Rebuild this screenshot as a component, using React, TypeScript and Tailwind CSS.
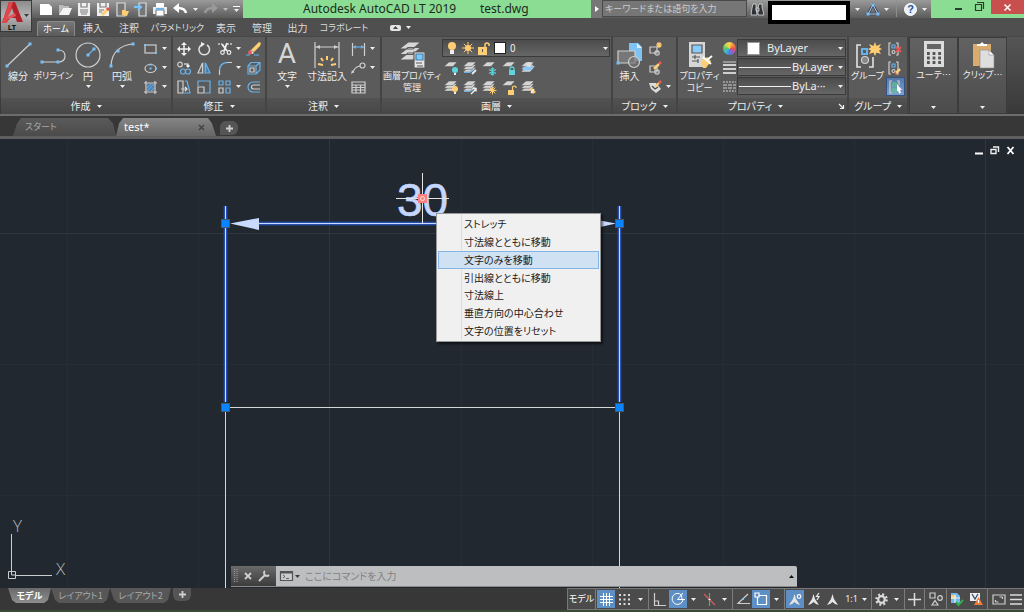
import { useState } from 'react';
import type { ReactNode } from 'react';

const G = '#cfcfcf';
const B = '#69b1e8';
const Y = '#ffce73';

function Icon({ w = 16, h = 16, vb, children }: { w?: number; h?: number; vb?: string; children: ReactNode }) {
  return (
    <svg width={w} height={h} viewBox={vb ?? `0 0 ${w} ${h}`} fill="none" stroke={G} strokeWidth={1.2} className="shrink-0 overflow-visible" aria-hidden="true">
      {children}
    </svg>
  );
}

function Caret({ dark = false }: { dark?: boolean }) {
  return (
    <svg width="5" height="3" viewBox="0 0 5 3" className="shrink-0" aria-hidden="true">
      <path d="M0 0h5L2.5 3z" fill={dark ? '#3c3c3c' : '#eeeeee'} />
    </svg>
  );
}

// small blue grip points used all over the draw icons
function Dots({ at, s = 3 }: { at: number[][]; s?: number }) {
  return (
    <>
      {at.map(([x, y]) => (
        <rect key={`${x}-${y}`} x={x - s / 2} y={y - s / 2} width={s} height={s} fill="#77c0f5" stroke="none" />
      ))}
    </>
  );
}

function Sheets({ y = 0, n = 3, x = 0 }: { y?: number; n?: number; x?: number }) {
  return (
    <g fill="#d4d4d4" stroke="#555" strokeWidth=".5">
      {Array.from({ length: n }, (_, i) => n - 1 - i).map((i) => (
        <path key={i} d={`M${x} ${y + 4.5 + i * 2.8}L${x + 5} ${y + i * 2.8}h8l-4 4.500z`} />
      ))}
    </g>
  );
}

/* ---------- ribbon building blocks ---------- */

function Panel({ title, width, launcher, children }: { title: string; width: string; launcher?: boolean; children: ReactNode }) {
  return (
    <section className={`${width} flex shrink-0 flex-col border-r-2 border-[#444444] bg-[#5b5b5b]`}>
      <div className="flex h-[62px] items-start pt-[2px]">{children}</div>
      <button className="flex h-4 items-center justify-center gap-[6px] bg-linear-to-b from-[#525252] to-[#474747] text-[10px] leading-4 text-[#eeeeee]">
        <span className={launcher ? 'ml-auto' : ''}>{title}</span>
        <Caret />
        {launcher && (
          <span className="ml-auto pr-[3px]">
            <Icon w={5} h={5}>
              <path d="M0 0l4 4M4.500 1v3.500H1" stroke="#eee" />
            </Icon>
          </span>
        )}
      </button>
    </section>
  );
}

function Big({ label, width, caret, small, icon }: { label: string; width: string; caret?: boolean; small?: boolean; icon: ReactNode }) {
  return (
    <button className={`${width} ${small ? 'text-[9px]' : 'text-[10px]'} flex shrink-0 flex-col items-center leading-3 text-[#eeeeee]`}>
      <span className="flex h-[31px] items-center">{icon}</span>
      <span className="whitespace-pre">{label}</span>
      {caret && (
        <span className="mt-[3px] flex">
          <Caret />
        </span>
      )}
    </button>
  );
}

function Small({ name, icon, caret }: { name: string; icon: ReactNode; caret?: boolean }) {
  return (
    <button aria-label={name} className="flex h-[19px] items-center gap-1">
      {icon}
      {caret && <Caret />}
    </button>
  );
}

/* ---------- ribbon panels ---------- */

function DrawPanel() {
  return (
    <Panel title="作成" width="w-[172px]">
      <Big width="w-[34px]" label="線分" icon={<Icon w={26} h={28}><path d="M2 25L25 3" /><Dots at={[[2, 25], [25, 3]]} /></Icon>} />
      <Big width="w-9" small label="ポリライン" icon={<Icon w={28} h={28}><path d="M3 21h16q7 0 7-6t-7-6" /><Dots at={[[3, 21], [19, 21], [19, 9]]} /></Icon>} />
      <Big width="w-[34px]" caret label="円" icon={<Icon w={26} h={28}><circle cx="13" cy="14" r="12" /><path d="M13 14l6-6" stroke={B} /><Dots at={[[13, 14], [19, 8]]} /></Icon>} />
      <Big width="w-[34px]" caret label="円弧" icon={<Icon w={26} h={28}><path d="M2 25Q3 5 24 3" /><Dots at={[[2, 25], [9, 10], [24, 3]]} /></Icon>} />
      <div className="ml-1 flex flex-col">
        <Small name="長方形" caret icon={<Icon w={15} h={14}><rect x="2" y="3" width="11" height="8" /><Dots at={[[2, 3], [13, 11]]} s={2} /></Icon>} />
        <Small name="楕円" caret icon={<Icon w={15} h={14}><ellipse cx="7.500" cy="7.500" rx="5.500" ry="4" /><Dots at={[[7.5, 7.5], [7.5, 3.5], [13, 7.5]]} s={2} /></Icon>} />
        <Small name="ハッチング" caret icon={<Icon w={15} h={14}><rect x="4" y="4" width="7" height="7" fill="#4d86b5" stroke="none" /><path d="M1 3h13M1 12h13M3 1v13M12 1v13" /><path d="M4 8l4-4M4 11l7-7M8 11l3-3" stroke={B} strokeWidth=".8" /></Icon>} />
      </div>
    </Panel>
  );
}

function ModifyPanel() {
  return (
    <Panel title="修正" width="w-[94px]">
      <div className="grid grid-cols-[20px_21px_28px_18px] pl-1">
        <Small name="移動" icon={<Icon w={14} h={14}><path d="M7 2v10M2 7h10" stroke="#eee" strokeWidth="1.500" /><path d="M7 0l3 3H4zM7 14l3-3H4zM0 7l3-3v6zM14 7l-3-3v6z" fill="#eee" stroke="none" /></Icon>} />
        <Small name="回転" icon={<Icon w={14} h={14}><path d="M10 3A5.300 5.300 0 1 1 4.500 3" stroke="#e2e2e2" strokeWidth="1.500" /><path d="M4 0v5l4-3z" fill="#eee" stroke="none" /></Icon>} />
        <Small name="トリム" caret icon={<Icon w={14} h={14}><path d="M0 2h4M9 2h5" stroke="#fff" strokeDasharray="2 1" /><path d="M4 2l5 7M9 1L6 9" stroke="#eee" strokeWidth="1.800" /><circle cx="4.500" cy="10.500" r="1.800" stroke="#eee" /><circle cx="11" cy="10.500" r="1.800" stroke="#eee" /></Icon>} />
        <Small name="削除" icon={<Icon w={15} h={14}><path d="M5 8l8-8 2 1-1 3-6 6z" fill={Y} stroke="none" /><path d="M5 8l3 3-2 1-3-2z" fill="#eee" stroke="none" /><circle cx="4" cy="10.500" r="2" fill="#ee5a5a" stroke="none" /><path d="M0 13h4M8 13h5" stroke={B} /></Icon>} />
        <Small name="複写" icon={<Icon w={14} h={14}><circle cx="3" cy="3.500" r="2.300" /><path d="M7 3h4v3M9.500 4.500L11 6l1.500-1.500" stroke="#fff" /><circle cx="6" cy="10.500" r="2.500" stroke={B} /><circle cx="11" cy="10.500" r="2.500" stroke={B} /></Icon>} />
        <Small name="鏡像" icon={<Icon w={14} h={14}><path d="M5.500 2v10H1z" /><path d="M8.500 2v10H13z" fill="#3f7dab" stroke={B} /><path d="M7 1v12" stroke={B} strokeWidth=".8" /></Icon>} />
        <Small name="フィレット" caret icon={<Icon w={14} h={14}><path d="M1.500 9Q2 2 9 1.500" stroke={B} strokeWidth="1.400" /><path d="M9 1.500h5M1.500 14V9" /></Icon>} />
        <Small name="分解" icon={<Icon w={15} h={14}><path d="M2 5h8v8H2zM5 1.500h9V9l-4 4M2 5l3-3.500M10 5l4-3.500" stroke={B} /><path d="M4 7h4v4H4z" /></Icon>} />
        <Small name="ストレッチ" icon={<Icon w={14} h={14}><path d="M1 1h5v12H1zM4 9h5" /><path d="M8 7l2 2-2 2" stroke="#eee" /><path d="M8 1h2l3 12H7" stroke={B} /></Icon>} />
        <Small name="尺度変更" icon={<Icon w={14} h={14}><path d="M1 6V1h12v12H8" stroke={B} /><path d="M1 7h6v6H1z" /></Icon>} />
        <Small name="配列複写" caret icon={<Icon w={14} h={14}><path d="M1 1h4v4H1zM8 1h4v4H8zM8 8h4v5H8z" stroke={B} /><path d="M1 8h4v5H1z" /></Icon>} />
        <Small name="オフセット" icon={<Icon w={15} h={14}><path d="M14 2H7a5 5 0 0 0 0 10h7" stroke={B} /><path d="M14 5H7.500a2 2 0 0 0 0 4H14" /></Icon>} />
      </div>
    </Panel>
  );
}

function AnnotationPanel() {
  return (
    <Panel title="注釈" width="w-[115px]">
      <Big
        width="w-10"
        caret
        label="文字"
        icon={
          <Icon w={24} h={28}>
            <text x="12" y="22" textAnchor="middle" fontFamily="Roboto" fontSize="28" fill="#d6d6d6" stroke="none">A</text>
          </Icon>
        }
      />
      <Big width="w-[40px]" label="寸法記入" icon={<Icon w={28} h={28}><path d="M2 1v26M26 1v26M2 6h24" /><path d="M3 6l4-2v4zM25 6l-4-2v4z" fill={G} stroke="none" /><path d="M14 15v4M8 17l2 3M20 17l-2 3M5 23l5 1M23 23l-5 1" stroke={Y} strokeWidth="2" /></Icon>} />
      <div className="ml-1 flex flex-col">
        <Small name="長さ寸法" caret icon={<Icon w={15} h={14}><path d="M1.500 1v13M13.500 1v13" /><path d="M2 5h11" stroke={B} /><path d="M2 5l3-2v4zM13 5l-3-2v4z" fill={B} stroke="none" /></Icon>} />
        <Small name="引出線" caret icon={<Icon w={15} h={14}><path d="M2 12Q3 6 9 5" /><circle cx="11.500" cy="4.500" r="2.500" /><path d="M0 13l1-4 2 2z" fill={G} stroke="none" /></Icon>} />
        <Small name="表" icon={<Icon w={15} h={14}><path d="M1 2h13v11H1zM1 5h13M1 7.500h13M1 10h13M5 5v8M9.500 5v8" /></Icon>} />
      </div>
    </Panel>
  );
}

const layerTools: { name: string; n: number; mark: ReactNode }[] = [
  { name: '非表示', n: 1, mark: <><circle cx="11" cy="8" r="3" fill="#5fd4dc" stroke="none" /><path d="M10 11h2v2h-2z" fill="#eee" stroke="none" /></> },
  { name: '選択表示', n: 3, mark: <><path d="M1 10.500h6l3-3" stroke={B} /><path d="M9 12l4-4" stroke="#eee" strokeWidth="1.800" /></> },
  { name: 'フリーズ', n: 1, mark: <path d="M10.500 5.500v8M7 7.500l7 4M14 7.500l-7 4M9 6.500l1.500 1L12 6.500M9 12.500l1.500-1 1.500 1" stroke="#5fd4dc" /> },
  { name: 'ロック', n: 1, mark: <><path d="M7 8h6v5H7z" fill="#5fd4dc" stroke="none" /><path d="M8 8V6q2-2 4 0v2" stroke="#5fd4dc" /></> },
  { name: '現在層', n: 3, mark: <><path d="M1 8.500L5 4h9l-4 4.500z" fill="#8dc8f4" stroke="none" /><circle cx="8" cy="2.500" r="2.500" fill="#ddd" stroke="none" /></> },
  { name: '全表示', n: 3, mark: <><circle cx="11" cy="8" r="3" fill={Y} stroke="none" /><path d="M10 11h2v2h-2z" fill="#eee" stroke="none" /></> },
  { name: '選択解除', n: 3, mark: <><path d="M1 10.500h6l2-2" stroke={B} /><path d="M8 13l5-5M10 7.500h3v3" stroke="#eee" strokeWidth="1.500" /></> },
  { name: 'フリーズ解除', n: 3, mark: <><path d="M10.500 5.500v8M6.500 9.500h8M7.700 6.700l5.600 5.600M13.300 6.700l-5.600 5.600" stroke={Y} strokeWidth="1" /><circle cx="10.500" cy="9.500" r="2" fill={Y} stroke="none" /></> },
  { name: 'ロック解除', n: 1, mark: <><path d="M6 9h6v5H6z" fill={Y} stroke="none" /><path d="M10.500 9V6q2-2 3.500 0v1" stroke={Y} /></> },
  { name: '一致', n: 3, mark: <><path d="M8 8l4 5 3-2-4-4z" fill={Y} stroke="none" /><path d="M10 12l3-4" stroke="#eee" strokeWidth="1.500" /></> },
];

function LayerPanel() {
  return (
    <Panel title="画層" width="w-[231px]">
      <Big
        width="w-[60px]"
        small
        label={'画層プロパティ\n管理'}
        icon={
          <Icon w={28} h={28}>
            <path d="M1 19l9-7h13l-8 7zM1 13.500l9-7h13l-8 7zM1 8l9-7h13l-8 7z" fill="#d6d6d6" stroke="#5b5b5b" />
            <path d="M16 11h11v16H16z" fill="#e6e6e6" stroke="#5b5b5b" />
            <path d="M18 13h7v6h-7z" fill="#7fc8fa" stroke="#3f7dab" />
            <path d="M18 22h6M19 25h6" stroke="#555" />
          </Icon>
        }
      />
      <div className="flex flex-1 flex-col">
        <label className="mr-px flex h-[18px] items-center border border-[#3a3a3a] bg-linear-to-b from-[#4c4c4c] to-[#666666] pl-1">
          <Icon w={10} h={14}><circle cx="5" cy="5" r="4" fill={Y} stroke="none" /><path d="M3 9h4v4H3z" fill="#eee" stroke="none" /></Icon>
          <span className="ml-[5px]"><Icon w={12} h={12}><path d="M6 0v12M0 6h12M1.800 1.800l8.400 8.400M10.200 1.800l-8.400 8.400" stroke={Y} strokeWidth="1" /><circle cx="6" cy="6" r="3" fill={Y} stroke="none" /></Icon></span>
          <span className="ml-1"><Icon w={12} h={13}><path d="M0 5h9v8H0z" fill={Y} stroke="none" /><path d="M7 5V2q2-2 4 0v2" stroke={Y} strokeWidth="1.500" /><path d="M4 7h1v3H4z" fill="#555" stroke="none" /></Icon></span>
          <span className="ml-1 size-3 border border-[#222222] bg-white" />
          <select aria-label="画層" className="ml-1 flex-1 appearance-none text-[10px] leading-4 text-[#eeeeee]">
            <option>0</option>
          </select>
          <span className="pr-px"><Caret /></span>
        </label>
        <div className="mt-[2px] grid w-[98px] grid-cols-5 pl-[2px]">
          {layerTools.map((t) => (
            <Small key={t.name} name={t.name} icon={<Icon w={15} h={14}><Sheets n={t.n} />{t.mark}</Icon>} />
          ))}
        </div>
      </div>
    </Panel>
  );
}

function BlockPanel() {
  return (
    <Panel title="ブロック" width="w-[65px]">
      <Big
        width="w-[33px]"
        label="挿入"
        icon={
          <Icon w={27} h={28}>
            <path d="M13 2h9l4 4v14H13z" fill="#7fc3f2" stroke="none" />
            <path d="M21 2v5h5z" fill="#d8eefc" stroke="none" />
            <path d="M2 10h17v12H2z" fill="#777" />
            <circle cx="18" cy="21" r="5.500" fill="#777777aa" />
            <Dots at={[[2, 22]]} s={3} />
          </Icon>
        }
      />
      <div className="ml-[2px] flex flex-col">
        <Small name="ブロック作成" icon={<Icon w={14} h={14}><path d="M2 5h7v6H2z" /><circle cx="9" cy="11" r="2.200" /><path d="M11 0v6M8 3h6M9 1l4 4M13 1L9 5" stroke={Y} /></Icon>} />
        <Small name="ブロック編集" icon={<Icon w={14} h={14}><path d="M2 5h7v6H2z" /><circle cx="9" cy="11" r="2.200" /><path d="M6 8l5-5" stroke={Y} strokeWidth="2.500" /><path d="M11 3l2-2" stroke="#ee5a5a" strokeWidth="2.500" /></Icon>} />
        <Small name="属性編集" caret icon={<Icon w={14} h={14}><path d="M1 3h7l5 6-5 4-5-4z" fill="#ddd" stroke="none" /><path d="M4 6l3 3 3-2" stroke="#444" /><path d="M7 7l4-4" stroke={Y} strokeWidth="2" /><path d="M11 3l2-2" stroke="#ee5a5a" strokeWidth="2.500" /></Icon>} />
      </div>
    </Panel>
  );
}

function PropertySelect({ name, value, line }: { name: string; value: string; line?: boolean }) {
  return (
    <label className="flex h-[18px] items-center border border-[#3a3a3a] bg-linear-to-b from-[#4c4c4c] to-[#666666] pr-[2px] pl-px">
      {line ? <span className="h-px w-[52px] bg-[#eeeeee]" /> : <span className="mr-[6px] ml-2 size-[13px] border border-[#999999] bg-white" />}
      <select aria-label={name} className="w-px flex-1 appearance-none pl-px font-[Noto_Sans] text-[11px] leading-4 text-[#eeeeee]">
        <option>{value}</option>
      </select>
      <Caret />
    </label>
  );
}

function PropertiesPanel() {
  return (
    <Panel title="プロパティ" width="w-[171px]" launcher>
      <Big
        width="w-[43px]"
        small
        label={'プロパティ\nコピー'}
        icon={
          <Icon w={26} h={28}>
            <path d="M2 1h16v25H2z" fill="#d6d6d6" stroke="none" />
            <path d="M5 4h10v8H5z" fill="#8accf8" stroke="#555" />
            <path d="M5 16h8M5 20h6M8 14v4M11 18v4" stroke="#555" />
            <path d="M14 20l6-4 4 4-5 7h-3z" fill={Y} stroke="none" />
            <path d="M25 15l-5 4M16 16l8 7" stroke="#fff" strokeWidth="2" />
          </Icon>
        }
      />
      <div className="flex w-[16px] flex-col items-center">
        <Small name="色" icon={<span className="size-[13px] rounded-full bg-[conic-gradient(#ffce54,#f6903c,#e4534b,#a657c8,#4a7fe0,#40b8d0,#58c46a,#c4d84c,#ffce54)]" />} />
        <Small name="線の太さ" icon={<Icon w={13} h={13}><path d="M0 1h13" strokeWidth="1" /><path d="M0 4h13" strokeWidth="2" /><path d="M0 8h13" strokeWidth="2" /><path d="M0 12h13" strokeWidth="2" /></Icon>} />
        <Small name="線種" icon={<Icon w={13} h={13}><path d="M0 2h13M0 11h13" strokeWidth="1" strokeDasharray="2 1" /><path d="M0 5h13M0 8h13" strokeWidth="1" strokeDasharray="4 1" /></Icon>} />
      </div>
      <div className="mr-px flex flex-1 flex-col gap-px">
        <PropertySelect name="オブジェクトの色" value="ByLayer" />
        <PropertySelect name="オブジェクトの線の太さ" value="ByLayer" line />
        <PropertySelect name="オブジェクトの線種" value="ByLa···" line />
      </div>
    </Panel>
  );
}

function GroupPanel() {
  const brackets = <path d="M3 1H1v12h2M8 1h2v12H8" />;
  return (
    <Panel title="グループ" width="w-[60px]">
      <Big
        width="w-[37px]"
        small
        label="グループ"
        icon={
          <Icon w={28} h={28}>
            <path d="M7 4H3v22h4M15 26h4V16" stroke="#e2e2e2" strokeWidth="1.600" />
            <path d="M8 13V8h5v5z" stroke={B} strokeWidth="2" />
            <circle cx="11" cy="19" r="3.500" fill="#888" />
            <path d="M21 1l1.500 4L27 3l-2 3.500L28 8l-3 1.500L27 13l-4.500-1.500L21 15l-1.500-3.500L15 13l2-3.500L14 8l3-1.500L15 3l4.500 2z" fill={Y} stroke="none" />
          </Icon>
        }
      />
      <div className="flex flex-col">
        <Small name="グループ解除" icon={<Icon w={16} h={14} vb="-2 0 16 14">{brackets}<path d="M4 3h3v3H4z" stroke={B} /><circle cx="5.500" cy="10" r="1.500" /><path d="M8 5l5 5M13 5l-5 5" stroke="#ee5050" strokeWidth="1.800" /></Icon>} />
        <Small name="グループ編集" icon={<Icon w={16} h={14} vb="-2 0 16 14">{brackets}<path d="M4 3h3v3H4z" stroke={B} /><circle cx="5.500" cy="10" r="1.500" /><path d="M8 12l4-4" stroke={Y} strokeWidth="2.500" /><path d="M7 13l1-1" stroke="#ee5050" strokeWidth="2.500" /></Icon>} />
        <button aria-label="グループ選択" className="flex size-[19px] items-center justify-center border border-[#34527d] bg-linear-to-b from-[#5877a8] to-[#7ba0d2]">
          <Icon w={14} h={14}><path d="M3 1H1v12h2M8 1h2v4" /><path d="M4 3h3v3H4zM4 9h3v3H4z" stroke="#52d675" /><path d="M8 4l5 6H11l1 3-2 .5-1-3-1 1z" fill="#fff" stroke="none" /></Icon>
        </button>
      </div>
    </Panel>
  );
}

function CollapsedPanel({ label, icon }: { label: string; icon: ReactNode }) {
  return (
    <button className="flex w-[49px] shrink-0 flex-col items-center border border-[#3c3c3c] bg-linear-to-b from-[#626262] to-[#4c4c4c] pt-px text-[9px] leading-3 whitespace-nowrap text-[#eeeeee]">
      <span className="flex h-[30px] items-center">{icon}</span>
      <span>{label}</span>
      <span className="mt-auto mb-[4px]"><Caret /></span>
    </button>
  );
}

/* ---------- header ---------- */

const quickAccess: { name: string; icon: ReactNode }[] = [
  { name: '新規作成', icon: <path d="M2 2h9l3 3v8H2z" fill="#fff" stroke="none" /> },
  { name: '開く', icon: <><path d="M2 13V3h4l1 1h5v2H6z" fill="#bbb" stroke="none" /><path d="M2 13l4-7h9l-3 7z" fill="#f4f4f4" stroke="none" /></> },
  { name: '上書き保存', icon: <><path d="M2 1h12v13H2z" fill="#f0f0f0" stroke="none" /><path d="M5 1v4h6V1M4 8h8M4 10h8M5 12h6" stroke="#777" /></> },
  { name: '名前を付けて保存', icon: <><path d="M2 1h12v13H2z" fill="#f0f0f0" stroke="none" /><path d="M5 1v4h6V1M4 8h5M4 10h3" stroke="#777" /><path d="M7 13l6-6" stroke={Y} strokeWidth="3" /><path d="M12 8l2-2" stroke="#e05050" strokeWidth="3" /></> },
  { name: 'モバイルから開く', icon: <><path d="M3 1h8v13H3z" fill="#777" stroke="#ddd" /><path d="M8 13V8h3l1 1h3l-2 5z" fill={Y} stroke="none" /></> },
  { name: 'モバイルに保存', icon: <><path d="M6 1h7v13H6z" fill="#777" stroke="#ddd" /><path d="M1 5h6M5 2l3 3-3 3" stroke="#7cc4f8" strokeWidth="2" /></> },
  { name: '印刷', icon: <><path d="M4 1h8v4H4z" fill="#fff" stroke="none" /><path d="M1 5h14v7H1z" fill="#eee" stroke="none" /><path d="M4 8h8v6H4z" fill="#fff" stroke="#888" /><path d="M4 7h8" stroke={B} strokeWidth="2" /></> },
];

const ribbonTabs = [
  { label: '挿入', style: 'w-9' },
  { label: '注釈', style: 'w-9' },
  { label: 'パラメトリック', style: 'w-[61px] text-[9px]' },
  { label: '表示', style: 'w-9' },
  { label: '管理', style: 'w-9' },
  { label: '出力', style: 'w-[35px]' },
  { label: 'コラボレート', style: 'w-[58px] text-[9px]' },
];

function Header() {
  return (
    <header className="flex h-9 shrink-0 bg-[#4f4f4f]">
      <button className="relative flex h-8 w-8 shrink-0 flex-col items-center border border-[#3a3a3a] bg-linear-to-b from-[#8c8c8c] via-[#b4b4b4] to-[#868686] pr-2 font-[Liberation_Sans] text-[7px] leading-[7px] font-bold text-black">
        <Icon w={22} h={23}>
          <path d="M1 22L8 1h6l8 20h-6l-1.500-4H9l-3 4z" fill="#b3202a" stroke="none" />
          <path d="M8 1h4L6 22H1z" fill="#e0474d" stroke="none" />
          <path d="M11 7l2 6-6 3z" fill="#a9a9a9" stroke="none" />
          <path d="M5 17l9-5 1 3-7 3z" fill="#e5565a" stroke="none" />
        </Icon>
        <span>LT</span>
        <span className="absolute top-[13px] right-[2px]"><Caret dark /></span>
      </button>
      <div className="flex min-w-0 flex-1 flex-col">
        <div className="flex h-[18px] bg-linear-to-b from-[#9a9a9a] to-[#5c5c5c]">
          <nav className="flex w-[211px] shrink-0 items-center pl-1">
            {quickAccess.map((q) => (
              <button key={q.name} aria-label={q.name} className="flex w-[19px] justify-center pl-px">
                <Icon w={16} h={15}>{q.icon}</Icon>
              </button>
            ))}
            <button aria-label="元に戻す" className="flex w-[22px] items-center justify-center">
              <Icon w={14} h={12}><path d="M13 10Q12 5 5 5" stroke="#fff" strokeWidth="2.500" /><path d="M0 5l6-5v10z" fill="#fff" stroke="none" /></Icon>
            </button>
            <span className="flex w-[9px] justify-center"><Caret /></span>
            <button aria-label="やり直し" className="flex w-[21px] items-center justify-center">
              <Icon w={14} h={12}><path d="M1 10Q2 5 9 5" stroke="#9a9a9a" strokeWidth="2.500" /><path d="M14 5L8 0v10z" fill="#9a9a9a" stroke="none" /></Icon>
            </button>
            <span className="flex w-[9px] justify-center opacity-60"><Caret /></span>
            <span className="flex flex-1 flex-col items-center gap-[2px]"><i className="h-px w-[7px] bg-white" /><Caret /></span>
          </nav>
          <h1 className="flex flex-1 items-center bg-[#8bdd94] pl-[60px] font-[Noto_Sans] text-[12px] leading-[18px] whitespace-pre text-[#1c2b1e]">
            <span className="w-[177px]">Autodesk AutoCAD LT 2019</span>
            <span>test.dwg</span>
          </h1>
          <div className="flex w-[433px] shrink-0">
            <span className="flex w-[11px] items-center justify-center bg-[#777777]">
              <Icon w={4} h={6}><path d="M0 0l4 3-4 3z" fill="#fff" stroke="none" /></Icon>
            </span>
            <input aria-label="検索" placeholder="キーワードまたは語句を入力" className="h-[17px] w-[145px] border border-[#4a4a4a] bg-[#767676] px-[2px] text-[9px] leading-4 placeholder-[#cccccc]" />
            <button aria-label="検索開始" className="flex w-[21px] items-center justify-center">
              <Icon w={13} h={13}><path d="M2 1h3v3l1 8H0l1-7zM8 1h3v3l2 8H7V5zM5 5h3v3H5z" fill="#2e3338" stroke="#ddd" strokeWidth=".8" /></Icon>
            </button>
            <div className="z-10 mt-px h-[23px] w-[82px] border-4 border-black bg-white" />
            <div className="flex w-[81px] items-center">
              <span className="flex w-[14px] justify-center"><Caret /></span>
              <button aria-label="アカウント" className="flex w-[18px] justify-center">
                <Icon w={14} h={13}><path d="M7 2l5 9H2z" stroke="#33445e" strokeWidth="2.500" /><path d="M7 2l5 9H2z" stroke="#b9cbe4" strokeWidth="1" /><Dots at={[[7, 2], [12, 11], [2, 11]]} /></Icon>
              </button>
              <span className="flex w-[9px] justify-center"><Caret /></span>
              <i className="ml-[5px] h-4 w-px bg-[#8c8c8c]" />
              <button aria-label="ヘルプ" className="ml-[7px] flex size-[13px] items-center justify-center rounded-full border border-white bg-[#e8f0f8] font-[Liberation_Sans] text-[11px] leading-3 font-bold text-[#28538f]">?</button>
              <span className="flex flex-1 justify-center"><Caret /></span>
            </div>
            <button aria-label="最小化" className="flex w-[39px] items-center justify-end bg-[#8bdd94] pr-2">
              <Icon w={7} h={10}><path d="M0 5h7" stroke="#2b3b2d" strokeWidth="2" /></Icon>
            </button>
            <button aria-label="元のサイズに戻す" className="flex w-[21px] bg-[#8bdd94] pt-[2px] pl-[5px]">
              <Icon w={9} h={9}><path d="M.5 2.500h6v6h-6zM2 .5h6.500V7" stroke="#2b3b2d" /></Icon>
            </button>
            <div className="flex-1 bg-[#8bdd94]">
              <button aria-label="閉じる" className="flex h-[14px] w-full items-center justify-center bg-[#c94f4f]">
                <Icon w={7} h={7}><path d="M.5.5l6 6M6.500.5l-6 6" stroke="#fff" strokeWidth="1.500" /></Icon>
              </button>
            </div>
          </div>
        </div>
        <nav className="flex h-[18px] items-end pl-[5px] text-[10px] leading-4 whitespace-nowrap text-[#dddddd]">
          <button className="h-[15px] w-[38px] rounded-t-xs border border-b-0 border-[#8a8a8a] bg-linear-to-b from-[#777777] to-[#5b5b5b] text-[9px] leading-[14px] text-white">ホーム</button>
          {ribbonTabs.map((t) => (
            <button key={t.label} className={`${t.style} flex h-[17px] items-center justify-center`}>{t.label}</button>
          ))}
          <button aria-label="リボンの切り替え" className="ml-[17px] flex h-[17px] items-center gap-[5px]">
            <span className="flex h-[6px] w-[11px] items-center justify-center rounded-xs bg-[#e4e4e4]">
              <Icon w={5} h={3}><path d="M0 3h5L2.500 0z" fill="#444" stroke="none" /></Icon>
            </span>
            <Caret />
          </button>
        </nav>
      </div>
    </header>
  );
}

/* ---------- drawing area ---------- */

const menuItems = ['ストレッチ', '寸法線とともに移動', '文字のみを移動', '引出線とともに移動', '寸法線上', '垂直方向の中心合わせ', '文字の位置をリセット'];

function Drawing() {
  const grips = [[226, 84], [620, 84], [226, 268], [620, 268]];
  const selected = 'M225.500 67v196M619.500 67v196M258 84.500h330';
  return (
    <svg className="absolute inset-0 size-full" fill="none" aria-hidden="true">
      <path d="M67.500 0v449M198.500 0v449M461.500 0v449M592.500 0v449M723.500 0v449M854.500 0v449M0 225.500h2000M0 356.500h2000" stroke="#242d38" />
      <path d="M329.500 0v449M985.500 0v449M0 94.500h2000" stroke="#2d3643" />
      <path d="M225.500 268v400M619.500 268v400M226 268.500h394" stroke="#d4d7da" />
      {/* selection glow, then the line itself */}
      <path d={selected} stroke="#23458d" strokeWidth="5" strokeOpacity=".5" />
      <path d={selected} stroke="#2750ae" strokeWidth="3" />
      <path d={selected} stroke="#c9daff" />
      <path d="M230 84.500L259 79v12zM616 84.500L587 79v12z" fill="#c9daff" />
      <text x="397" y="77" fontSize="46" fontFamily="Liberation Sans" fill="#c5d6ff" stroke="#c5d6ff" strokeWidth=".6">30</text>
      <path d="M422.500 34v51M396 59.500h53" stroke="#e4e4e4" />
      <rect x="418" y="55" width="9" height="9" fill="#ff8080" />
      <circle cx="422.500" cy="59.500" r="2" stroke="#ffe0e0" />
      {grips.map(([x, y]) => (
        <rect key={`${x}-${y}`} x={x - 4.5} y={y - 3.5} width="8" height="8" fill="#0a84ff" stroke="#445a70" />
      ))}
      <path d="M11.500 395v37M15 436.500h37M8.500 432.500h7v7h-7zM11.500 432v4h4" stroke="#c9cdd0" />
      <g fill="#b4b8bb" fontFamily="Open Sans" fontSize="17" fontWeight="300">
        <text x="13" y="393">Y</text>
        <text x="56" y="436">X</text>
      </g>
    </svg>
  );
}

function ContextMenu() {
  const [hovered, setHovered] = useState(2);
  return (
    <ul className="absolute top-[74px] left-[436px] flex h-[129px] w-[165px] flex-col border border-[#979797] bg-[#f0f0f0] p-px text-[10px] text-[#1a1a1a] shadow-[2px_2px_2px_#00000088]">
      <li className="absolute top-px bottom-px left-[24px] w-px bg-[#dcdcdc]" aria-hidden="true" />
      {menuItems.map((item, i) => (
        <li key={item} className="flex flex-1">
          <button
            onMouseEnter={() => setHovered(i)}
            className={`relative flex flex-1 items-center border pl-[25px] leading-3 ${
              hovered === i ? 'border-[#84b4e4] bg-[#cfe1f2]' : 'border-transparent'
            }`}
          >
            {item}
          </button>
        </li>
      ))}
    </ul>
  );
}

function CommandLine() {
  return (
    <div className="absolute bottom-px left-[231px] flex h-[21px] w-[566px] rounded-t-xs border-b border-[#8a8a8a] bg-[#bdbec0]">
      <div className="flex w-[45px] items-center gap-[6px] rounded-tl-xs bg-linear-to-b from-[#6a6a6a] to-[#3c3c3c] pl-[3px]">
        <Icon w={4} h={14}><path d="M.5 0v14M3 0v14" stroke="#999" strokeDasharray="1 1" /></Icon>
        <button aria-label="コマンドラインを閉じる"><Icon w={8} h={8}><path d="M1 1l6 6M7 1L1 7" strokeWidth="1.800" /></Icon></button>
        <button aria-label="カスタマイズ"><Icon w={12} h={12}><path d="M1 11l6-6" strokeWidth="2" /><path d="M7 1q-2 2 0 4 2 2 4 0" strokeWidth="1.800" /></Icon></button>
      </div>
      <button aria-label="最近使用したコマンド" className="flex items-center gap-[2px] pl-1">
        <Icon w={13} h={10}><path d="M.5.5h12v9H.5z" fill="#ccc" stroke="#555" /><path d="M0 1.500h13" stroke="#555" strokeWidth="2" /><path d="M3 4l2 1.500L3 7M6 7.500h3" stroke="#555" strokeWidth=".9" /></Icon>
        <Caret dark />
      </button>
      <input aria-label="コマンド" placeholder="ここにコマンドを入力" className="min-w-0 flex-1 pl-[5px] text-[10px] leading-5 placeholder-[#808284]" />
      <button aria-label="履歴" className="pr-[3px]"><Icon w={5} h={3}><path d="M0 3h5L2.500 0z" fill="#111" stroke="none" /></Icon></button>
    </div>
  );
}

/* ---------- status bar ---------- */

function StatusButton({ name, width = 'w-[19px]', active, children }: { name: string; width?: string; active?: boolean; children: ReactNode }) {
  return (
    <button aria-label={name} className={`${width} flex h-[18px] shrink-0 items-center justify-center ${active ? 'bg-[#5d8fc4]' : ''}`}>
      {children}
    </button>
  );
}

function StatusGroup({ children }: { children: ReactNode }) {
  return <div className="flex h-full shrink-0 items-center border-l border-[#7c7c7c] px-px">{children}</div>;
}

const scaleMark = <path d="M6.500 1l1.500 5 4 6-3-1-2.500-2L4 11l-3 1 4-6z" fill="#e6e6e6" stroke="none" />;

function StatusBar() {
  const drop = <StatusButton name="オプション" width="w-[13px]"><Caret /></StatusButton>;
  return (
    <div className="flex h-[22px] overflow-hidden border-y border-l border-[#777777] bg-[#4b4b4b]">
      <button className="w-[27px] text-[9px] leading-5 whitespace-nowrap text-white">モデル</button>
      <StatusGroup>
        <StatusButton name="グリッド" width="w-[18px]" active><Icon w={13} h={13}><path d="M3.500 0v13M6.500 0v13M9.500 0v13M0 3.500h13M0 6.500h13M0 9.500h13" stroke="#fff" strokeWidth="1" /></Icon></StatusButton>
        <StatusButton name="スナップ"><Icon w={11} h={11}><path d="M0 1h11M0 5.500h11M0 10h11" stroke="#ddd" strokeWidth="1.800" strokeDasharray="2 2.500" /></Icon></StatusButton>
        {drop}
      </StatusGroup>
      <StatusGroup>
        <StatusButton name="直交モード"><Icon w={13} h={13}><path d="M1.500 0v12.500H13M1.500 8h4v4.500" /></Icon></StatusButton>
        <StatusButton name="極トラッキング" width="w-[18px]" active><Icon w={14} h={14}><path d="M10.500 3A5.500 5.500 0 1 0 12 8M6.500 7.500L12 1M6.500 7.500H14M10 3Q11 5 11 8" stroke="#fff" strokeWidth="1" /></Icon></StatusButton>
        {drop}
        <StatusButton name="アイソメ" width="w-[18px]"><Icon w={13} h={13}><path d="M6.500 0v13" stroke="#45b36b" /><path d="M1 1l11 11" stroke="#d25c5c" /><path d="M5.500 6.500h2" stroke="#fff" /></Icon></StatusButton>
        {drop}
      </StatusGroup>
      <StatusGroup>
        <StatusButton name="参照線" width="w-[18px]"><Icon w={13} h={12}><path d="M11 1L1 10.500h12" /><Dots at={[[6, 6]]} s={2} /></Icon></StatusButton>
        <StatusButton name="オブジェクトスナップ" width="w-[18px]" active><Icon w={14} h={14}><path d="M5 3.500h7.500v9h-9V5" stroke="#fff" /><path d="M1 1h4v4H1z" stroke="#fff" /></Icon></StatusButton>
        {drop}
      </StatusGroup>
      <StatusGroup>
        <StatusButton name="注釈表示" width="w-[18px]" active><Icon w={14} h={13}>{scaleMark}<circle cx="11" cy="3.500" r="1.800" stroke="#fff" /></Icon></StatusButton>
        <StatusButton name="自動尺度"><Icon w={14} h={13}>{scaleMark}<path d="M12 0L9.500 3.500H12L10 7" stroke="#eee" /></Icon></StatusButton>
        <StatusButton name="注釈尺度"><Icon w={13} h={13}>{scaleMark}</Icon></StatusButton>
        <button className="flex h-[18px] w-[28px] items-center justify-center gap-[4px] font-[Noto_Sans] text-[9px] leading-4 text-[#eeeeee]">1:1<Caret /></button>
      </StatusGroup>
      <StatusGroup>
        <StatusButton name="ワークスペース" width="w-[17px]"><Icon w={13} h={13}><circle cx="6.500" cy="6.500" r="5.200" stroke="#ddd" strokeWidth="2.200" strokeDasharray="2 2.084" /><circle cx="6.500" cy="6.500" r="3.300" stroke="#ddd" strokeWidth="2.200" /></Icon></StatusButton>
        {drop}
      </StatusGroup>
      <StatusGroup>
        <StatusButton name="注釈モニター" width="w-[17px]"><Icon w={13} h={13}><path d="M6.500 0v13M0 6.500h13" strokeWidth="1.500" stroke="#ddd" /></Icon></StatusButton>
      </StatusGroup>
      <StatusGroup>
        <StatusButton name="選択表示"><Icon w={14} h={14}><path d="M1 1h5v5H1zM6 8.500l3 4.500H3z" /><circle cx="11" cy="6" r="2.300" /></Icon></StatusButton>
      </StatusGroup>
      <StatusGroup>
        <StatusButton name="ハードウェア" width="w-[18px]"><Icon w={14} h={14}><path d="M1 3V1h6l3 3v7H1z" fill="#75b9ea" stroke="none" /><path d="M1 3h5v4H1z" fill={Y} stroke="none" /><path d="M1 6h9M5 3v8" stroke="#eee" /><path d="M6 10l2.500 3L13 8" stroke="#2fae50" strokeWidth="2" /></Icon></StatusButton>
        <StatusButton name="通知" width="w-[20px]"><Icon w={14} h={14}><path d="M1 1h10v8H1z" fill="#eee" stroke="none" /><path d="M3 2l3 5 3-5" stroke="#346" /><path d="M9.500 5l4.500 8H5z" fill="#ee7a3a" stroke="none" /><path d="M9.500 8v3" stroke="#fff" /></Icon></StatusButton>
      </StatusGroup>
      <StatusGroup>
        <StatusButton name="フルスクリーン" width="w-[19px]"><Icon w={14} h={11}><path d="M1 1h12v9H1zM3.500 8V6M3.500 8h3M10.500 3h-3M10.500 3v2" /></Icon></StatusButton>
        <StatusButton name="カスタマイズ" width="w-[15px]"><Icon w={12} h={11}><path d="M0 1h12M0 5.500h12M0 10h12" stroke="#ddd" strokeWidth="1.500" /></Icon></StatusButton>
      </StatusGroup>
    </div>
  );
}

export default function App() {
  return (
    <div className="flex h-screen min-h-96 flex-col overflow-hidden bg-[#373737] font-[Noto_Sans_CJK_JP,sans-serif] [font-feature-settings:'palt']">
      <Header />

      {/* Ribbon */}
      <div className="flex h-20 shrink-0 border-t border-b-2 border-t-[#474747] border-b-[#6c6c6c] bg-linear-to-b from-[#555555] to-[#393939] pl-px">
        <DrawPanel />
        <ModifyPanel />
        <AnnotationPanel />
        <LayerPanel />
        <BlockPanel />
        <PropertiesPanel />
        <GroupPanel />
        <CollapsedPanel label="ユーテ…" icon={<Icon w={20} h={26}><path d="M0 0h20v26H0z" fill="#dcdcdc" stroke="none" /><path d="M3 3h14v5H3z" fill="#666" stroke="none" /><path d="M3 12.500h14M3 17h14M3 21.500h14" stroke="#555" strokeWidth="3" strokeDasharray="2.800 2.800" /></Icon>} />
        <CollapsedPanel label="クリップ…" icon={<Icon w={22} h={27}><path d="M1 3h18v22H1z" fill="#d9ab6e" stroke="none" /><path d="M5 5V3h3l2-2 2 2h3v2z" fill="#fff" stroke="none" /><path d="M8 9h9l5 5v13H8z" fill="#dedede" stroke="#888" strokeWidth=".6" /><path d="M17 9v5h5z" fill="#fff" stroke="#888" strokeWidth=".6" /></Icon>} />
      </div>

      {/* File tabs */}
      <div className="flex h-[23px] shrink-0 items-end border-b-3 border-[#5f5f5f] pl-[13px] text-[10px] leading-[18px]">
        <button className="h-[18px] w-[103px] bg-linear-to-b from-[#5a5a5a] to-[#4b4b4b] pl-3 text-left text-[9px] text-[#a8a8a8] [clip-path:polygon(0_100%,4px_30%,8px_0,calc(100%-8px)_0,calc(100%-3px)_30%,100%_100%)]">スタート</button>
        <div className="flex h-[18px] w-[100px] items-center bg-linear-to-b from-[#858585] to-[#666666] pr-[11px] pl-2 text-white [clip-path:polygon(0_100%,3px_30%,7px_0,calc(100%-8px)_0,calc(100%-4px)_30%,100%_100%)]">
          <button className="flex-1 text-left font-[Noto_Sans] text-[11px]">test*</button>
          <button aria-label="タブを閉じる"><Icon w={7} h={7}><path d="M1 1l5 5M6 1L1 6" stroke="#444" strokeWidth="1.500" /></Icon></button>
        </div>
        <button aria-label="新しいタブ" className="mb-px ml-1 flex h-[14px] w-[18px] items-center justify-center rounded-t-md rounded-br-md bg-[#555555]">
          <Icon w={7} h={7}><path d="M3.500 0v7M0 3.500h7" strokeWidth="1.800" /></Icon>
        </button>
      </div>

      {/* Model space */}
      <main className="relative min-h-0 flex-1 overflow-hidden bg-[#212830]">
        <Drawing />
        <div className="absolute top-[7px] right-[9px] flex items-center gap-[7px]">
          <button aria-label="図面を最小化"><Icon w={9} h={9}><path d="M1 7.500h8" stroke="#fff" strokeWidth="2" /></Icon></button>
          <button aria-label="図面を元に戻す"><Icon w={9} h={9}><path d="M1 3.500h5v4H1zM3 1h5.500v5" stroke="#eee" strokeWidth="1.400" /></Icon></button>
          <button aria-label="図面を閉じる"><Icon w={9} h={9}><path d="M1.500 1l6 7M7.500 1l-6 7" stroke="#fff" strokeWidth="1.800" /></Icon></button>
        </div>
        <ContextMenu />
        <CommandLine />
      </main>

      <footer className="flex h-6 shrink-0 justify-between border-b-2 border-[#394a38]">
        <nav className="flex h-[15px] pl-2 text-[9px] leading-[14px] whitespace-nowrap text-[#aaaaaa]">
          <button className="w-[43px] bg-linear-to-b from-[#6a6a6a] to-[#8d8d8d] font-bold text-white [clip-path:polygon(0_0,4px_80%,8px_100%,calc(100%-7px)_100%,calc(100%-3px)_80%,100%_0)]">モデル</button>
          <button className="w-[59px] bg-[#575757] [clip-path:polygon(0_0,4px_80%,8px_100%,calc(100%-7px)_100%,calc(100%-3px)_80%,100%_0)]">レイアウト1</button>
          <button className="w-[61px] bg-[#575757] [clip-path:polygon(0_0,4px_80%,8px_100%,calc(100%-7px)_100%,calc(100%-3px)_80%,100%_0)]">レイアウト2</button>
          <button aria-label="新しいレイアウト" className="ml-[2px] flex h-[13px] w-[18px] items-center justify-center rounded-b-md bg-[#555555]">
            <Icon w={7} h={7}><path d="M3.500 0v7M0 3.500h7" strokeWidth="1.800" /></Icon>
          </button>
        </nav>
        <StatusBar />
      </footer>
    </div>
  );
}
